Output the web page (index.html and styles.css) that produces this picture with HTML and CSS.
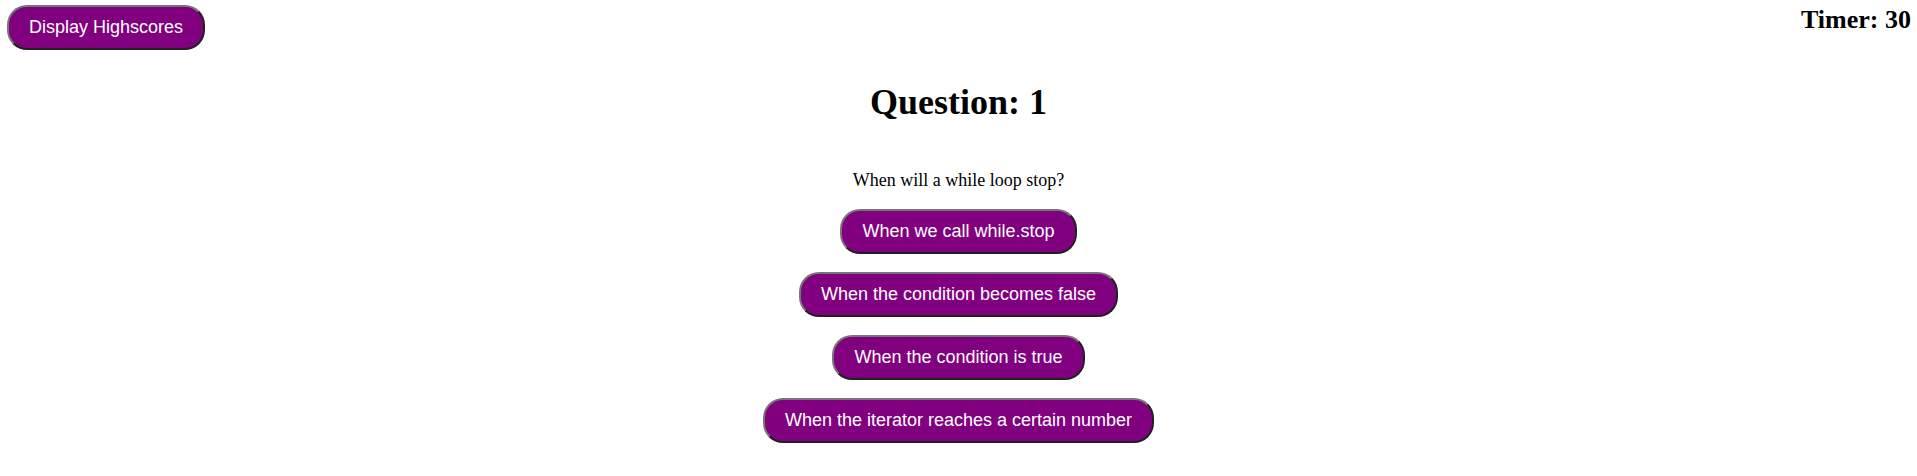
FILE: index.html
```html
<!DOCTYPE html>
<html lang="en">
<head>
<meta charset="utf-8">
<title>Code Quiz</title>
<link rel="stylesheet" href="styles.css">
</head>
<body>
<header class="top-bar">
  <button class="btn" type="button">Display Highscores</button>
  <h2 class="timer">Timer: 30</h2>
</header>
<main class="quiz">
  <h1 class="title">Question: 1</h1>
  <p class="question">When will a while loop stop?</p>
  <div class="answers">
    <button class="btn" type="button">When we call while.stop</button>
    <button class="btn" type="button">When the condition becomes false</button>
    <button class="btn" type="button">When the condition is true</button>
    <button class="btn" type="button">When the iterator reaches a certain number</button>
  </div>
</main>
</body>
</html>
```
FILE: styles.css
```css
body {
  margin: 0;
  background: #fff;
  color: #000;
  font-family: "Liberation Serif", "Times New Roman", serif;
}

.top-bar {
  display: flex;
  justify-content: space-between;
  align-items: flex-start;
  padding: 5px 6px 0 7px;
}

.btn {
  padding: 10px 20px;
  border: 2px solid;
  border-color: #767676 #212121 #212121 #767676;
  border-radius: 20px;
  background: purple;
  color: #fff;
  font: 18px/21px "Liberation Sans", Arial, sans-serif;
}

.timer {
  margin: 0;
  font-size: 26px;
  line-height: 30px;
}

.quiz {
  display: flex;
  flex-direction: column;
  align-items: center;
}

.title {
  margin: 31px 0 47px;
  font-size: 36px;
  line-height: 42px;
}

.question {
  margin: 0 0 19px;
  font-size: 18px;
  line-height: 20px;
}

.answers {
  display: flex;
  flex-direction: column;
  align-items: center;
  gap: 18px;
}
```
